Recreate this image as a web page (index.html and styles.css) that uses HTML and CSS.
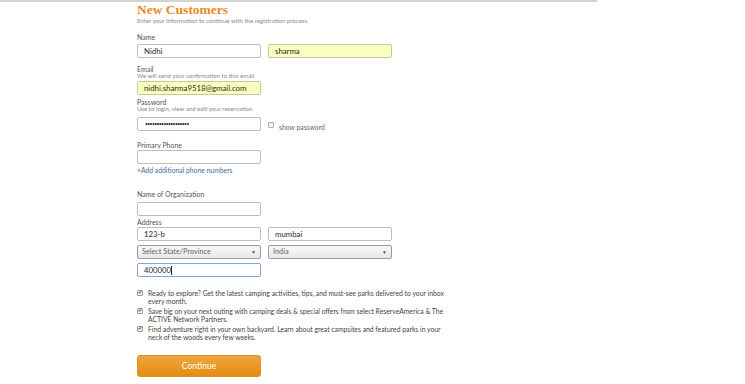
FILE: index.html
```html
<!DOCTYPE html>
<html lang="en">
  <head>
    <meta charset="UTF-8" />
    <title>New Customers</title>
    <link rel="stylesheet" href="styles.css">
  </head>
  <body>
    <div class="topline"></div>

    <div class="signup">
      <h1>New Customers</h1>
      <p class="intro">Enter your information to continue with the registration process.</p>

      <!-- Name -->
      <div class="field f-name">
        <label>Name</label>
        <div class="row">
          <div class="input">Nidhi</div>
          <div class="input filled">sharma</div>
        </div>
      </div>

      <!-- Email -->
      <div class="field f-email">
        <label>Email</label>
        <p class="hint">We will send your confirmation to this email</p>
        <div class="row">
          <div class="input filled">nidhi.sharma9518@gmail.com</div>
        </div>
      </div>

      <!-- Password -->
      <div class="field f-pass">
        <label>Password</label>
        <p class="hint">Use to login, view and edit your reservation</p>
        <div class="row">
          <div class="input dots">&bull;&bull;&bull;&bull;&bull;&bull;&bull;&bull;&bull;&bull;&bull;&bull;&bull;&bull;&bull;&bull;&bull;&bull;&bull;</div>
          <div class="showpass"><span class="box"></span>show password</div>
        </div>
      </div>

      <!-- Phone -->
      <div class="field f-phone">
        <label>Primary Phone</label>
        <div class="row">
          <div class="input"></div>
        </div>
        <a class="addlink">+Add additional phone numbers</a>
      </div>

      <!-- Organization -->
      <div class="field f-org">
        <label>Name of Organization</label>
        <div class="row">
          <div class="input"></div>
        </div>
      </div>

      <!-- Address -->
      <div class="field f-addr">
        <label>Address</label>
        <div class="row">
          <div class="input">123-b</div>
          <div class="input">mumbai</div>
        </div>
        <div class="row">
          <div class="select">Select State/Province<span class="arrow">&#9660;</span></div>
          <div class="select">India<span class="arrow">&#9660;</span></div>
        </div>
        <div class="row">
          <div class="input focused">400000<span class="caret"></span></div>
        </div>
      </div>

      <!-- Opt-ins -->
      <ul class="optins">
        <li><span class="check">&#10004;</span><span>Ready to explore? Get the latest camping activities, tips, and must-see parks delivered to your inbox every month.</span></li>
        <li><span class="check">&#10004;</span><span>Save big on your next outing with camping deals &amp; special offers from select ReserveAmerica &amp; The ACTIVE Network Partners.</span></li>
        <li><span class="check">&#10004;</span><span>Find adventure right in your own backyard. Learn about great campsites and featured parks in your neck of the woods every few weeks.</span></li>
      </ul>

      <div class="btn">Continue</div>
    </div>
  </body>
</html>
```

FILE: styles.css
```css
* {
  margin: 0;
  padding: 0;
  box-sizing: border-box;
}

body {
  background: #ffffff;
  font-family: Lato, 'Open Sans', Arial, sans-serif;
  color: #555555;
  width: 745px;
  height: 384px;
  overflow: hidden;
}

.topline {
  width: 597px;
  height: 2px;
  background: #d3d3d3;
}

.signup {
  margin-left: 137px;
  width: 330px;
}

h1 {
  font-family: 'Liberation Serif', serif;
  font-weight: bold;
  font-size: 13.5px;
  line-height: 16px;
  color: #e8891f;
}

.intro {
  font-size: 6.1px;
  line-height: 8px;
  color: #8a8a8a;
  margin-top: -1px;
}

label {
  display: block;
  font-size: 7px;
  line-height: 8px;
  color: #555555;
}

.hint {
  font-size: 6.1px;
  line-height: 8px;
  color: #8a8a8a;
  margin-top: -1px;
}

.row {
  display: flex;
  gap: 7px;
}

.input,
.select {
  width: 124px;
  height: 14px;
  border: 1px solid #bdbdbd;
  border-radius: 2px;
  background: #ffffff;
  font-size: 7.8px;
  line-height: 12px;
  color: #2a2a2a;
  padding: 0 6px;
  position: relative;
}

.input.filled {
  background: #faffbd;
  border-color: #c8c8a0;
}

.input.dots {
  font-size: 5px;
  letter-spacing: -0.6px;
  padding-left: 7px;
}

.input.focused {
  border-color: #7ea6e0;
}

.caret {
  display: inline-block;
  width: 1px;
  height: 9px;
  background: #222222;
  vertical-align: middle;
  margin-top: -2px;
}

.select {
  background: linear-gradient(#f8f8f8, #e8e8e8);
  border-color: #9a9a9a;
  color: #666666;
  font-size: 7.3px;
  padding-left: 4px;
}

.arrow {
  position: absolute;
  right: 4px;
  top: 0;
  font-size: 5px;
  color: #555555;
}

.showpass {
  display: flex;
  align-items: center;
  font-size: 6.8px;
  color: #666666;
  padding-top: 5px;
}

.showpass .box {
  width: 6px;
  height: 6px;
  border: 1px solid #b0b0b0;
  background: #f2f2f2;
  border-radius: 1px;
  margin-right: 5px;
  margin-top: -3px;
}

/* vertical rhythm of each field */
.f-name { margin-top: 8px; }
.f-name label { margin-bottom: 3px; }

.f-email { margin-top: 7px; }
.f-email .row { margin-top: 1px; }

.f-pass { margin-top: 3px; }
.f-pass .row { margin-top: 4px; }

.f-phone { margin-top: 10px; }
.f-phone .row { margin-top: 1px; }

.addlink {
  display: block;
  margin-top: 2px;
  font-size: 6.8px;
  line-height: 8px;
  color: #3f6d96;
}

.f-org { margin-top: 16px; }
.f-org .row { margin-top: 4px; }

.f-addr { margin-top: 2px; }
.f-addr .row { margin-top: 4px; }
.f-addr .row:first-of-type { margin-top: 1px; }

.optins {
  list-style: none;
  margin-top: 12px;
  width: 318px;
}

.optins li {
  display: flex;
  font-size: 6.8px;
  line-height: 8px;
  color: #444444;
  margin-bottom: 2px;
}

.optins li:last-child { margin-bottom: 0; }
.optins li:nth-child(3) { margin-top: 1px; }

.check {
  flex: none;
  width: 6px;
  height: 6px;
  margin: 1px 5px 0 0;
  border: 1px solid #9a9a9a;
  border-radius: 1px;
  font-size: 4.5px;
  line-height: 4px;
  text-align: center;
  color: #333333;
  background: #f4f4f4;
}

.btn {
  margin-top: 14px;
  width: 124px;
  height: 22px;
  border-radius: 3px;
  background: linear-gradient(#efa63f, #e38d12);
  border: 1px solid #df9024;
  color: #ffffff;
  font-size: 8.5px;
  line-height: 20px;
  text-align: center;
}
```
